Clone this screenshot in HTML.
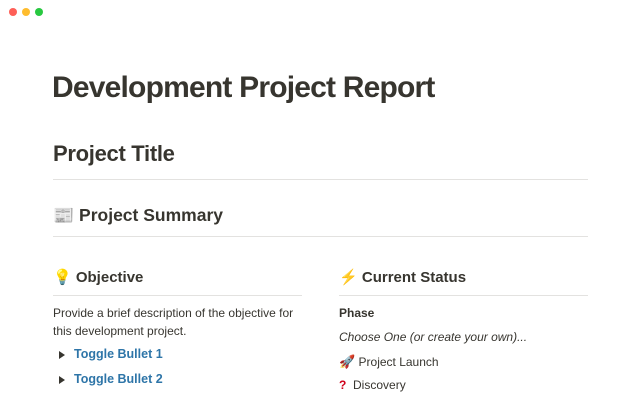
<!DOCTYPE html>
<html><head><meta charset="utf-8"><style>
body{margin:0;width:640px;height:400px;overflow:hidden;background:#fff;font-family:"Liberation Sans",sans-serif;color:#37352f;position:relative}
.a{position:absolute;white-space:nowrap}
.dot{position:absolute;top:8px;width:8px;height:8px;border-radius:50%}
.hr{position:absolute;height:1px;background:#e3e2e0}
.t{font-size:12px;color:#37352f}
.lk{color:#2e75a8;font-weight:bold;font-size:12.5px}
.tri{position:absolute;width:0;height:0;border-left:6px solid #37352f;border-top:4px solid transparent;border-bottom:4px solid transparent}
</style></head><body>
<div class="dot" style="left:9px;background:#fe5f57"></div>
<div class="dot" style="left:22px;background:#febc2e"></div>
<div class="dot" style="left:35px;background:#28c840"></div>

<div class="a" style="left:52px;top:71px;font-size:30px;font-weight:bold;letter-spacing:-0.8px">Development Project Report</div>
<div class="a" style="left:53px;top:141px;font-size:22px;font-weight:bold;letter-spacing:-0.3px">Project Title</div>
<div class="hr" style="left:53px;top:179px;width:535px"></div>
<div class="a" style="left:53px;top:205px;font-size:17.5px;font-weight:bold"><span style="font-size:17px">📰</span> Project Summary</div>
<div class="hr" style="left:53px;top:236px;width:535px"></div>

<div class="a" style="left:53px;top:268px;font-size:15px;font-weight:bold"><span style="font-size:15px">💡</span> Objective</div>
<div class="hr" style="left:53px;top:295px;width:249px"></div>
<div class="a t" style="left:53px;top:306px">Provide a brief description of the objective for</div>
<div class="a t" style="left:53px;top:324px">this development project.</div>
<div class="tri" style="left:59px;top:351px"></div>
<div class="a lk" style="left:74px;top:347px">Toggle Bullet 1</div>
<div class="tri" style="left:59px;top:376px"></div>
<div class="a lk" style="left:74px;top:372px">Toggle Bullet 2</div>

<div class="a" style="left:339px;top:268px;font-size:15px;font-weight:bold"><span style="font-size:15px;color:#f4b400">⚡</span> Current Status</div>
<div class="hr" style="left:339px;top:295px;width:249px"></div>
<div class="a t" style="left:339px;top:306px;font-weight:bold">Phase</div>
<div class="a t" style="left:339px;top:330px;font-style:italic">Choose One (or create your own)...</div>
<div class="a t" style="left:339px;top:354px"><span style="font-size:13px">🚀</span> Project Launch</div>
<div class="a t" style="left:339px;top:378px"><span style="color:#d0021b;font-weight:bold">?</span>&nbsp; Discovery</div>
</body></html>
